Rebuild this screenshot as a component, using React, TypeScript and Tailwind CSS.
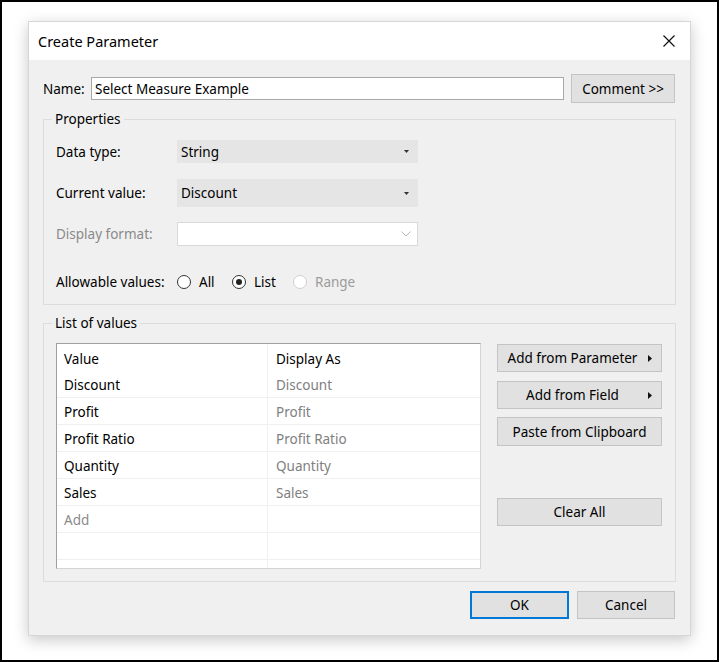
import React from "react";

function Caret() {
  return (
    <svg width="5" height="3" viewBox="0 0 5 3" className="block">
      <path d="M0 0 L5 0 L2.5 3 Z" fill="#333" />
    </svg>
  );
}

function RightTri() {
  return (
    <svg width="4" height="7" viewBox="0 0 4 7" className="block">
      <path d="M0 0 L4 3.5 L0 7 Z" fill="#111" />
    </svg>
  );
}

function Radio({ checked, disabled }: { checked?: boolean; disabled?: boolean }) {
  return (
    <span
      className={
        "flex h-[14px] w-[14px] items-center justify-center rounded-full border bg-white " +
        (disabled ? "border-[#cfcfcf]" : "border-[#333]")
      }
    >
      {checked && <span className="h-[6px] w-[6px] rounded-full bg-[#222]" />}
    </span>
  );
}

const rows = ["Discount", "Profit", "Profit Ratio", "Quantity", "Sales"];

export default function App() {
  return (
    <div className="h-[662px] w-[719px] border-2 border-black bg-white pl-[26px] pt-[19px] font-['Noto_Sans',sans-serif] text-[13.5px] text-black">
      <div className="flex h-[615px] w-[663px] flex-col border border-[#d6d6d6] bg-[#f0f0f0] shadow-[0_4px_14px_rgba(0,0,0,0.22)]">
        {/* Title bar */}
        <div className="flex h-[38px] items-center justify-between bg-white pl-[9px] pr-[15px]">
          <span className="text-[14.5px] leading-none">Create Parameter</span>
          <svg width="12" height="12" viewBox="0 0 12 12" className="block">
            <path d="M0.5 0.5 L11.5 11.5 M11.5 0.5 L0.5 11.5" stroke="#111" strokeWidth="1.2" />
          </svg>
        </div>

        {/* Body */}
        <div className="flex flex-1 flex-col px-[14px]">
          {/* Name row */}
          <div className="mt-[14px] flex h-[29px] items-center">
            <span className="w-[48px] pt-[2px] leading-none">Name:</span>
            <div className="flex h-[23px] w-[473px] items-center border border-[#a8a8a8] bg-white px-[3px] pt-[2px] leading-none">
              Select Measure Example
            </div>
            <button className="ml-[7px] flex h-[29px] w-[104px] items-center justify-center border border-[#c4c4c4] bg-[#e1e1e1] pt-[2px] leading-none">
              Comment &gt;&gt;
            </button>
          </div>

          {/* Properties */}
          <fieldset className="mt-[6px] w-[633px] border border-[#dcdcdc] pb-[12px] pl-[12px] pt-[11px]">
            <legend className="-ml-[4px] px-[3px] leading-[20px]">Properties</legend>
            <div className="flex h-[23px] items-center">
              <span className="w-[121px] pt-[2px] leading-none">Data type:</span>
              <div className="flex h-[23px] w-[241px] items-center justify-between bg-[#e5e5e5] pl-[4px] pr-[9px] leading-none">
                <span className="pt-[2px]">String</span>
                <Caret />
              </div>
            </div>
            <div className="mt-[16px] flex h-[28px] items-center">
              <span className="w-[121px] pt-[2px] leading-none">Current value:</span>
              <div className="flex h-[28px] w-[241px] items-center justify-between bg-[#e5e5e5] pl-[4px] pr-[9px] leading-none">
                <span className="pt-[2px]">Discount</span>
                <Caret />
              </div>
            </div>
            <div className="mt-[15px] flex h-[24px] items-center">
              <span className="w-[121px] pt-[2px] leading-none text-[#8a8a8a]">Display format:</span>
              <div className="flex h-[24px] w-[241px] items-center justify-end border border-[#d9d9d9] bg-white pr-[6px]">
                <svg width="10" height="6" viewBox="0 0 10 6" className="block">
                  <path d="M0.5 0.5 L5 5 L9.5 0.5" stroke="#b5b5b5" strokeWidth="1" fill="none" />
                </svg>
              </div>
            </div>
            <div className="mt-[26px] flex h-[20px] items-center">
              <span className="w-[121px] pt-[2px] leading-none">Allowable values:</span>
              <div className="flex w-[55px] items-center">
                <Radio />
                <span className="ml-[8px] pt-[2px] leading-none">All</span>
              </div>
              <div className="flex w-[61px] items-center">
                <Radio checked />
                <span className="ml-[8px] pt-[2px] leading-none">List</span>
              </div>
              <div className="flex items-center">
                <Radio disabled />
                <span className="ml-[8px] pt-[2px] leading-none text-[#9b9b9b]">Range</span>
              </div>
            </div>
          </fieldset>

          {/* List of values */}
          <fieldset className="mt-[8px] w-[633px] border border-[#dcdcdc] pb-[12px] pl-[12px] pt-[10px]">
            <legend className="-ml-[4px] px-[3px] leading-[20px]">List of values</legend>
            <div className="flex">
              <div className="flex h-[226px] w-[425px] flex-col overflow-hidden border border-b-[#d4d4d4] border-l-[#a0a0a0] border-r-[#d4d4d4] border-t-[#a0a0a0] bg-white">
                <div className="flex h-[27px] shrink-0 items-center">
                  <div className="flex h-full w-[211px] items-center border-r border-[#f0f0f0] pl-[7px] pt-[3px]">Value</div>
                  <div className="pl-[8px] pt-[3px]">Display As</div>
                </div>
                {rows.map((r) => (
                  <div key={r} className="flex h-[27px] shrink-0 items-center border-b border-[#f0f0f0]">
                    <div className="flex h-full w-[211px] items-center border-r border-[#f0f0f0] pl-[7px] pt-[3px]">{r}</div>
                    <div className="pl-[8px] pt-[3px] text-[#808080]">{r}</div>
                  </div>
                ))}
                <div className="flex h-[27px] shrink-0 items-center border-b border-[#f0f0f0]">
                  <div className="flex h-full w-[211px] items-center border-r border-[#f0f0f0] pl-[7px] pt-[3px] text-[#8a8a8a]">Add</div>
                </div>
                <div className="flex h-[27px] shrink-0 items-center border-b border-[#f0f0f0]">
                  <div className="h-full w-[211px] border-r border-[#f0f0f0]" />
                </div>
                <div className="flex flex-1 items-center">
                  <div className="h-full w-[211px] border-r border-[#f0f0f0]" />
                </div>
              </div>
              <div className="ml-[16px] flex w-[165px] flex-col pt-[1px]">
                <button className="relative flex h-[28px] items-center justify-center border border-[#c4c4c4] bg-[#e1e1e1] pr-[14px] pt-[2px] leading-none">
                  Add from Parameter
                  <span className="absolute right-[9px] top-[10px]"><RightTri /></span>
                </button>
                <button className="relative mt-[9px] flex h-[28px] items-center justify-center border border-[#c4c4c4] bg-[#e1e1e1] pr-[14px] pt-[2px] leading-none">
                  Add from Field
                  <span className="absolute right-[9px] top-[10px]"><RightTri /></span>
                </button>
                <button className="mt-[8px] flex h-[29px] items-center justify-center border border-[#c4c4c4] bg-[#e1e1e1] pt-[2px] leading-none">
                  Paste from Clipboard
                </button>
                <button className="mt-[52px] flex h-[28px] items-center justify-center border border-[#c4c4c4] bg-[#e1e1e1] pt-[2px] leading-none">
                  Clear All
                </button>
              </div>
            </div>
          </fieldset>

          {/* Footer */}
          <div className="mt-[9px] flex justify-end pr-[1px]">
            <button className="flex h-[28px] w-[99px] items-center justify-center border-2 border-[#0078d7] bg-[#e1e1e1] pt-[2px] leading-none">
              OK
            </button>
            <button className="ml-[8px] flex h-[28px] w-[98px] items-center justify-center border border-[#c4c4c4] bg-[#e1e1e1] pt-[2px] leading-none">
              Cancel
            </button>
          </div>
        </div>
      </div>
    </div>
  );
}
